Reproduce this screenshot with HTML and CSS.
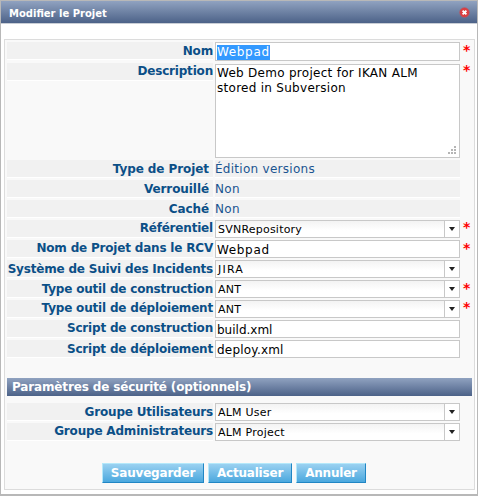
FILE: index.html
```html
<!DOCTYPE html>
<html lang="fr">
<head>
<meta charset="utf-8">
<title>Modifier le Projet</title>
<link rel="stylesheet" href="styles.css">
</head>
<body>
<div class="dialog">
  <header class="titlebar"><span class="title">Modifier le Projet</span>
    <svg class="close" width="11" height="11" viewBox="0 0 11 11"><circle cx="5.5" cy="5.5" r="4.8" fill="#dc3e40" stroke="#b95563" stroke-width=".6"/><path d="M3.6 3.6l3.8 3.8M7.4 3.6L3.6 7.4" stroke="#fff" stroke-width="1.9"/></svg>
  </header>
  <main class="form">
    <div class="row first"><span class="label">Nom</span><span class="input"><span class="selected wide">Webpad</span></span><span class="star">*</span></div>
    <div class="row tall"><span class="label up">Description</span><span class="input area">Web Demo project for IKAN ALM<br>stored in Subversion
      <svg class="grip" width="9" height="9" viewBox="0 0 9 9" fill="#b5b5b5"><path d="M6 0h2v2H6zM3 3h2v2H3zM6 3h2v2H6zM0 6h2v2H0zM3 6h2v2H3zM6 6h2v2H6z"/></svg></span><span class="star up-star">*</span></div>
    <div class="row"><span class="label inset">Type de Projet</span><span class="value">Édition versions</span></div>
    <div class="row"><span class="label inset">Verrouillé</span><span class="value">Non</span></div>
    <div class="row"><span class="label inset">Caché</span><span class="value">Non</span></div>
    <div class="row"><span class="label up">Référentiel</span><span class="select"><span>SVNRepository</span><i class="arrow"></i></span><span class="star up-star">*</span></div>
    <div class="row"><span class="label up">Nom de Projet dans le RCV</span><span class="input wide">Webpad</span><span class="star">*</span></div>
    <div class="row"><span class="label">Système de Suivi des Incidents</span><span class="select"><span class="caps">JIRA</span><i class="arrow"></i></span></div>
    <div class="row"><span class="label">Type outil de construction</span><span class="select"><span>ANT</span><i class="arrow"></i></span><span class="star">*</span></div>
    <div class="row"><span class="label up">Type outil de déploiement</span><span class="select"><span>ANT</span><i class="arrow"></i></span><span class="star up-star">*</span></div>
    <div class="row"><span class="label up">Script de construction</span><span class="input">build.xml</span></div>
    <div class="row"><span class="label">Script de déploiement</span><span class="input spaced">deploy.xml</span></div>
    <h2 class="section">Paramètres de sécurité (optionnels)</h2>
    <div class="row"><span class="label">Groupe Utilisateurs</span><span class="select"><span>ALM User</span><i class="arrow"></i></span></div>
    <div class="row"><span class="label up">Groupe Administrateurs</span><span class="select"><span>ALM Project</span><i class="arrow"></i></span></div>
    <div class="buttons"><button class="save">Sauvegarder</button><button class="refresh">Actualiser</button><button class="cancel">Annuler</button></div>
  </main>
</div>
</body>
</html>
```
FILE: styles.css
```css
* { box-sizing: border-box; }
body { margin: 0; background: #fff; font: 12px "DejaVu Sans", sans-serif; color: #000; }
.dialog { width: 478px; height: 496px; border: 1px solid #b8b8b8; border-bottom-width: 2px; }
.titlebar { height: 23px; padding: 0 7px 0 8px; display: flex; align-items: center; justify-content: space-between; background: linear-gradient(#90a2c0, #4c6288); border-bottom: 1px solid #c9ced6; }
.title { color: #fff; font-size: 10px; font-weight: bold; line-height: 12px; padding-top: 3px; }
.close { display: block; }
.form { margin: 15px 2px 0 3px; height: 451px; border: 1px solid #dcdcdc; background: #f9f9f9; padding: 2px 2px 0; }
.row { display: grid; grid-template-columns: 206px 245px 1fr; column-gap: 2px; height: 20px; align-items: start; white-space: nowrap; }
.first { height: 21px; }
.tall { height: 97px; }
.label { height: 18px; background: #f1f1f1; border-bottom: 1px solid #fff; color: #0b4f87; font-weight: bold; text-align: right; line-height: 18px; letter-spacing: -.19px; }
.inset { padding-right: 4px; letter-spacing: -.08px; }
.up { line-height: 16px; }
.input, .select { height: 18px; background: #fff; border: 1px solid #c8c8c8; line-height: 18px; padding-left: 1px; }
.first .input { height: 19px; }
.selected { display: inline-block; height: 15px; line-height: 15px; background: #3399ff; color: #fff; }
.wide { letter-spacing: .65px; }
.spaced { letter-spacing: .2px; }
.area { position: relative; height: 94px; margin-top: 1px; padding-top: 1px; line-height: 15px; letter-spacing: .28px; }
.grip { position: absolute; right: 2px; bottom: 2px; }
.value { height: 18px; background: #f1f1f1; border-bottom: 1px solid #fff; line-height: 18px; color: #1a5490; letter-spacing: .28px; }
.select { display: flex; justify-content: space-between; padding-left: 2px; font-size: 11px; letter-spacing: .22px; background: linear-gradient(#f3f3f3, #fff 60%); }
.caps { letter-spacing: 1.2px; }
.arrow { width: 15px; height: 16px; border-left: 1px solid #c8c8c8; background: #fff; display: flex; align-items: center; justify-content: center; }
.arrow::before { content: ""; border: 3.5px solid transparent; border-top: 4px solid #222; border-bottom: 0; }
.star { color: #f00; font-size: 14px; font-weight: bold; line-height: 17px; padding-left: 1px; }
.up-star { line-height: 15px; }
.section { margin: 18px 0 7px; height: 18px; padding-left: 5px; background: linear-gradient(#90a2c0, #4c6288); color: #fff; font-size: 12px; line-height: 18px; letter-spacing: -.15px; }
.buttons { display: flex; gap: 4px; margin: 20px 0 0 95px; }
button { height: 20px; padding: 0; border: 1px solid #2186c4; border-top-color: #b4e8fa; border-left-color: #b4e8fa; background: linear-gradient(#9ad1f1, #4ba8de); color: #fff; font: bold 12px/18px "DejaVu Sans", sans-serif; letter-spacing: -.2px; }
.save { width: 102px; }
.refresh { width: 84px; }
.cancel { width: 70px; }
```
